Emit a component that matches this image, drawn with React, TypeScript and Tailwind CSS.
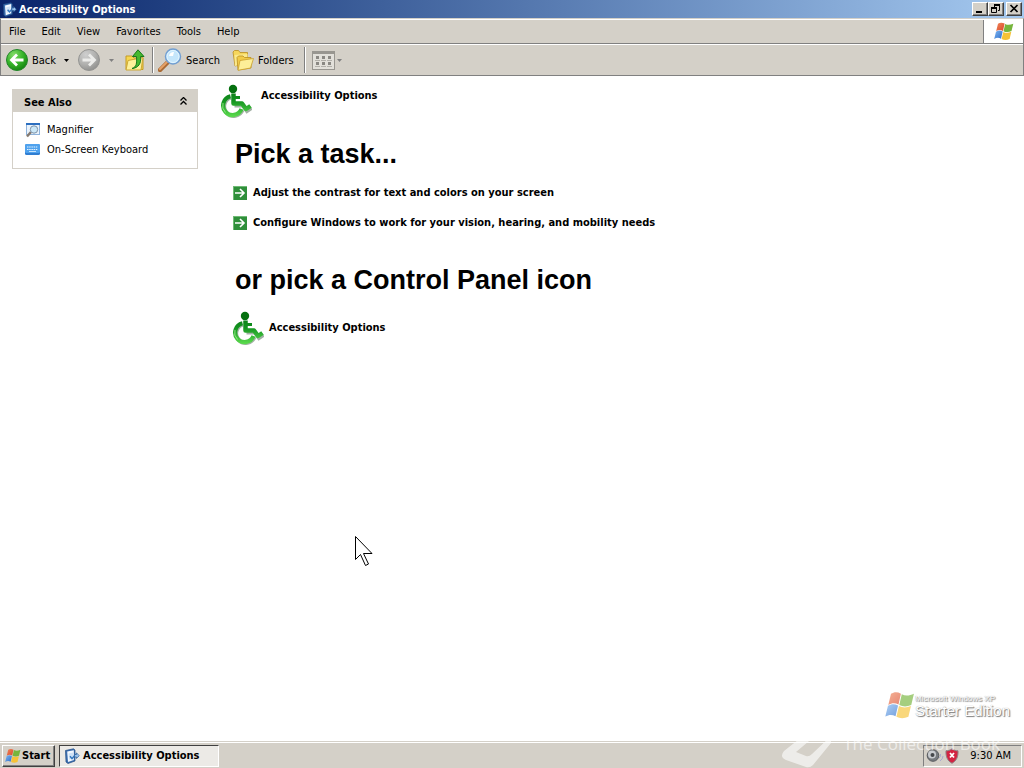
import type { ReactNode } from 'react'

const raised =
  'border border-t-white border-l-white border-r-[#404040] border-b-[#404040] bg-[#d4d0c8] shadow-[inset_-1px_-1px_0_#808080]'

function WindowsFlag({ className }: { className?: string }) {
  return (
    <svg viewBox="0 0 20 19" className={className} aria-hidden="true">
      <defs>
        <linearGradient id="flagRed" x1="0" y1="0" x2="1" y2="1">
          <stop offset="0" stopColor="#f0865a" />
          <stop offset="1" stopColor="#d9482a" />
        </linearGradient>
        <linearGradient id="flagBlue" x1="0" y1="0" x2="1" y2="1">
          <stop offset="0" stopColor="#7db4f0" />
          <stop offset="1" stopColor="#2f6fcb" />
        </linearGradient>
      </defs>
      <path d="M4 1.700C6 .3 8.400 .3 10.600 1.600L9 8.900C6.900 7.700 4.600 7.700 2.200 9.100Z" fill="url(#flagRed)" />
      <path d="M11.200 2C13.500 3.300 16.200 3.100 19.300 1.700L17.500 9.100C14.800 10.400 12 10.400 9.500 9.200Z" fill="#76b53c" />
      <path d="M2 9.700C4.200 8.300 6.500 8.300 8.700 9.500L7 16.700C4.900 15.400 2.600 15.500 .2 16.900Z" fill="url(#flagBlue)" />
      <path d="M9.300 9.900C11.700 11.100 14.500 11.100 17.300 9.800L15.600 17C12.800 18.300 10 18.300 7.600 17Z" fill="#f6c236" />
    </svg>
  )
}

function OptionsIcon({ className }: { className?: string }) {
  return (
    <svg viewBox="0 0 16 16" className={className} aria-hidden="true">
      <path d="M1.500 2.500 9.500 .8 11 2v11L4 15.500 2 14Z" fill="#3d6fb0" stroke="#1f4a82" strokeWidth=".7" />
      <path d="M3.200 3.600 9.800 2.200v9.800L4 14Z" fill="#f4f9ff" />
      <path d="M4.500 5.500 9 4.500v5.500L5 11.700Z" fill="#cfe2f6" />
      <path d="m6 8.300 2 2.400L12 6" fill="none" stroke="#3377bd" strokeWidth="1.500" />
      <path d="M10.500 6.500h2V4.800l2.700 2.900-2.700 2.800V9h-2Z" fill="#9dc4ed" stroke="#285b96" strokeWidth=".7" />
    </svg>
  )
}

function WheelchairIcon() {
  return (
    <svg viewBox="0 0 32 34" className="h-[34px] w-8 shrink-0" aria-hidden="true">
      <defs>
        <linearGradient id="wheel" gradientUnits="userSpaceOnUse" x1="0" y1="1" x2="0" y2="33">
          <stop offset="0" stopColor="#05700f" />
          <stop offset=".5" stopColor="#149420" />
          <stop offset="1" stopColor="#5cdc4e" />
        </linearGradient>
      </defs>
      <g fill="none" stroke="#56705a" strokeOpacity=".55">
        <path d="M10.500 13.500A9.500 9.500 0 1 0 22.500 26" strokeWidth="4" />
        <path d="M14.500 21.500H23l4 5.500 4.500-3" strokeWidth="4" />
      </g>
      <g fill="none" stroke="url(#wheel)" strokeLinejoin="round">
        <path d="M10.500 12.300A9.500 9.500 0 1 0 21.500 25" strokeWidth="4.200" />
        <path d="M13.500 9.500V19.500h8.500l4 5.500 4.500-3" strokeWidth="4.500" />
        <path d="M13 13.500h7" strokeWidth="3" />
      </g>
      <circle cx="13" cy="5" r="4.200" fill="#05700f" />
      <path d="M3 19a9.500 9.500 0 0 0 2.500 9.500" fill="none" stroke="#a6f295" strokeWidth=".8" />
    </svg>
  )
}

function RoundArrow({ back }: { back?: boolean }) {
  return (
    <svg viewBox="0 0 24 24" className="size-6 shrink-0" aria-hidden="true">
      <defs>
        <radialGradient id={back ? 'backFill' : 'forwardFill'} cx=".35" cy=".25" r=".8">
          <stop offset="0" stopColor={back ? '#83db69' : '#cfcfcf'} />
          <stop offset=".55" stopColor={back ? '#35b329' : '#b2b2b0'} />
          <stop offset="1" stopColor={back ? '#14820f' : '#8f8f8d'} />
        </radialGradient>
      </defs>
      <circle
        cx="12"
        cy="12"
        r="10.500"
        fill={back ? 'url(#backFill)' : 'url(#forwardFill)'}
        stroke={back ? '#23862a' : '#949492'}
      />
      <path
        d={back ? 'M18.500 12H7M12 6.500 6.500 12l5.500 5.500' : 'M5.500 12H17M12 6.500l5.500 5.500-5.500 5.500'}
        fill="none"
        stroke={back ? '#fff' : '#ececea'}
        strokeWidth="2.800"
      />
    </svg>
  )
}

function Caret({ className }: { className?: string }) {
  return (
    <svg viewBox="0 0 5 3" className={`h-[3px] w-[5px] shrink-0 ${className ?? ''}`} aria-hidden="true">
      <path d="M0 0h5L2.500 3Z" fill="currentColor" />
    </svg>
  )
}

function UpFolderIcon() {
  return (
    <svg viewBox="0 0 22 22" className="size-[22px]" aria-hidden="true">
      <path d="M2 7h6l2 2h9v11.500H2Z" fill="#f6d750" stroke="#c49b24" />
      <path d="m4 11.500 15-3-2 12.500H2Z" fill="#fdf09a" stroke="#cda735" />
      <path d="M8 19.500c4.500-1.500 5-5 4.500-12H8.500L14 .8l6 6.700h-3.400c.8 7-2.200 11.500-8.600 12Z" fill="#45b82f" stroke="#18791b" />
    </svg>
  )
}

function SearchIcon() {
  return (
    <svg viewBox="0 0 24 24" className="size-6" aria-hidden="true">
      <path d="m10 14-8 8" stroke="#a96a35" strokeWidth="4.500" strokeLinecap="round" />
      <path d="m10 13-8 8" stroke="#e5a066" strokeWidth="2.200" strokeLinecap="round" />
      <circle cx="15" cy="8.500" r="7.500" fill="#c5e6fb" stroke="#739fd1" strokeWidth="1.500" />
      <circle cx="15" cy="8.500" r="6" fill="none" stroke="#e4f6ff" />
      <path d="M11 8a4.500 4.500 0 0 1 5-4l-1 4Z" fill="#fff" />
    </svg>
  )
}

function FoldersIcon() {
  return (
    <svg viewBox="0 0 22 22" className="size-[22px]" aria-hidden="true">
      <path d="M1 3 2.500 1.500h4L8 3.500h7.500V14L3 17Z" fill="#f6d65c" stroke="#b98e21" strokeWidth=".8" />
      <path d="m2.500 6 13-1v9L3 17Z" fill="#fbe98c" />
      <path d="M5 8.500 6.500 7H11l1.500 1.500H19V19L6 21Z" fill="#f2cb48" stroke="#b98e21" strokeWidth=".8" />
      <path d="m8 11.500 13.500-2-3 9.500L6 21.300Z" fill="#fdef98" stroke="#caa02c" strokeWidth=".8" />
    </svg>
  )
}

function ViewsIcon() {
  return (
    <svg viewBox="0 0 23 19" className="h-[19px] w-[23px]" aria-hidden="true">
      <rect x=".5" y=".5" width="22" height="18" fill="#e2e0da" stroke="#989690" />
      <path d="M1 2h21" stroke="#989690" strokeWidth="2" />
      {[4, 10, 16].map((x) =>
        [5, 11].map((y) => (
          <g key={`${x}-${y}`}>
            <rect x={x} y={y} width="3" height="3" fill="#8a8883" />
            <rect x={x - 1} y={y + 4} width="5" height="1" fill="#b2b0aa" />
          </g>
        )),
      )}
    </svg>
  )
}

function GoIcon() {
  return (
    <svg viewBox="0 0 14 14" className="size-[14px] shrink-0" aria-hidden="true">
      <rect width="14" height="14" fill="#2f8f3a" />
      <path d="M0 0h14v1H1v13H0Z" fill="#6fba74" />
      <path d="M2 7h9M7 3l4 4-4 4" fill="none" stroke="#fff" strokeWidth="1.600" />
    </svg>
  )
}

function MagnifierIcon() {
  return (
    <svg viewBox="0 0 16 16" className="size-4" aria-hidden="true">
      <rect x="1.500" y="1.500" width="13" height="11" fill="#eaf3fc" stroke="#8eb3dc" />
      <path d="M1 2h14" stroke="#2c6fc0" strokeWidth="2" />
      <path d="m6 10-4 4.500" stroke="#857a70" strokeWidth="2.500" />
      <circle cx="9" cy="7.500" r="3.700" fill="#cbe8f8" stroke="#7f93a8" />
    </svg>
  )
}

function KeyboardIcon() {
  return (
    <svg viewBox="0 0 16 16" className="size-4" aria-hidden="true">
      <rect x="0" y="2" width="15" height="11" rx="1.500" fill="#2f7ed2" />
      <rect x="0" y="2" width="15" height="9" rx="1.500" fill="#4fa2ee" />
      <path d="M2 5h11M2 7.500h11" stroke="#e5f4ff" strokeDasharray="1.500 .7" />
      <path d="M4 9.500h7" stroke="#c8e4fb" />
    </svg>
  )
}

function TitleButton({ label, children }: { label: string; children: ReactNode }) {
  return (
    <button type="button" aria-label={label} className={`h-[14px] w-4 ${raised}`}>
      <svg viewBox="0 0 14 12" className="h-3 w-[14px]" fill="none" stroke="#000" aria-hidden="true">
        {children}
      </svg>
    </button>
  )
}

function Separator() {
  return <div className="mx-1 h-[26px] w-0.5 border-l border-r border-l-[#808080] border-r-white" />
}

const menus = ['File', 'Edit', 'View', 'Favorites', 'Tools', 'Help']
const tasks = [
  'Adjust the contrast for text and colors on your screen',
  'Configure Windows to work for your vision, hearing, and mobility needs',
]

export default function App() {
  return (
    <div className="relative flex min-h-screen flex-col overflow-hidden bg-white font-['DejaVu_Sans_Condensed','DejaVu_Sans',sans-serif] text-[11px] leading-[14px] text-black">
      <header className="flex h-[18px] items-center bg-linear-to-r from-[#0a246a] to-[#a6caf0] pr-0.5 pl-0.5 font-bold text-white">
        <OptionsIcon className="size-[15px]" />
        <h1 className="grow pt-px pl-0.5">Accessibility Options</h1>
        <TitleButton label="Minimize">
          <path d="M3 9h6" strokeWidth="2" />
        </TitleButton>
        <TitleButton label="Restore">
          <path d="M5 2h6M2 5h6" strokeWidth="2" />
          <path d="M5.500 2v2M10.500 2v5.500H9M2.500 5v4.500h5V5" />
        </TitleButton>
        <div className="w-0.5" />
        <TitleButton label="Close">
          <path d="m3.500 2 7 7M10.500 2l-7 7" strokeWidth="1.700" />
        </TitleButton>
      </header>

      <div className="border-x border-t border-[#808080] border-t-[#d4d0c8] bg-[#d4d0c8]">
        <nav className="flex h-[25px] border-t border-b border-t-white border-b-[#808080]">
          <div className="flex grow items-center gap-4 pt-px pl-2">
            {menus.map((menu) => (
              <button key={menu} type="button">
                {menu}
              </button>
            ))}
          </div>
          <div className="flex w-10 items-center justify-center border-l border-[#808080] bg-white">
            <WindowsFlag className="h-[19px] w-5" />
          </div>
        </nav>

        <div className="flex h-8 items-center border-t border-b border-t-white border-b-[#808080] pl-1">
          <button type="button" className="flex items-center gap-[3px]">
            <RoundArrow back />
            <span className="pt-px">Back</span>
          </button>
          <button type="button" aria-label="Back history" className="px-2">
            <Caret />
          </button>
          <button type="button" aria-label="Forward">
            <RoundArrow />
          </button>
          <button type="button" aria-label="Forward history" className="px-2 text-[#808080]">
            <Caret />
          </button>
          <button type="button" aria-label="Up" className="px-0.5">
            <UpFolderIcon />
          </button>
          <Separator />
          <button type="button" className="flex items-center gap-1">
            <SearchIcon />
            <span className="pt-px">Search</span>
          </button>
          <button type="button" className="ml-3 flex items-center gap-1">
            <FoldersIcon />
            <span className="pt-px">Folders</span>
          </button>
          <div className="w-1.5" />
          <Separator />
          <button type="button" aria-label="Views" className="flex items-center gap-0.5 pl-0.5 text-[#808080]">
            <ViewsIcon />
            <Caret />
          </button>
        </div>
      </div>

      <div className="flex grow items-start pl-3">
        <aside className="mt-[13px] w-[186px] shrink-0 border border-[#d4d0c8]">
          <div className="flex h-[22px] items-center justify-between bg-[#d4d0c8] pr-2.5 pl-[11px]">
            <h2 className="pt-1 font-bold">See Also</h2>
            <button type="button" aria-label="Collapse See Also">
              <svg viewBox="0 0 7 8" className="h-2 w-[7px]" fill="none" stroke="#000" aria-hidden="true">
                <path d="m.5 3.500 3-3 3 3M.5 7.500l3-3 3 3" strokeWidth="1.300" />
              </svg>
            </button>
          </div>
          <ul className="space-y-1 pt-2.5 pb-2.5 pl-3">
            <li>
              <a href="#magnifier" className="flex items-center gap-1.5">
                <MagnifierIcon />
                Magnifier
              </a>
            </li>
            <li>
              <a href="#keyboard" className="flex items-center gap-1.5">
                <KeyboardIcon />
                On-Screen Keyboard
              </a>
            </li>
          </ul>
        </aside>

        <main className="min-w-0 grow pt-2 pl-[22px] font-bold">
          <div className="flex gap-[9px]">
            <WheelchairIcon />
            <p className="pt-[5px]">Accessibility Options</p>
          </div>
          <div className="pl-3">
            <h2 className="mt-5 pl-[3px] font-['Liberation_Sans',Arial,sans-serif] text-[27px] leading-8">
              Pick a task...
            </h2>
            <ul className="mt-4 space-y-4 pl-px">
              {tasks.map((task) => (
                <li key={task}>
                  <a href="#task" className="flex items-center gap-1.5">
                    <GoIcon />
                    {task}
                  </a>
                </li>
              ))}
            </ul>
            <h2 className="mt-[34px] pl-[3px] font-['Liberation_Sans',Arial,sans-serif] text-[27px] leading-8">
              or pick a Control Panel icon
            </h2>
            <a href="#accessibility" className="mt-[15px] flex w-fit items-center gap-[5px]">
              <WheelchairIcon />
              Accessibility Options
            </a>
          </div>
        </main>
      </div>

      {/* desktop edition mark */}
      <div className="absolute right-3.5 bottom-12 flex items-center font-['Liberation_Sans',Arial,sans-serif] text-white">
        <WindowsFlag className="h-[29px] w-[30px] opacity-65" />
        <div className="[text-shadow:1px_1px_1px_#777,0_0_1px_#999]">
          <p className="text-[8px] leading-[10px]">Microsoft Windows XP</p>
          <p className="text-[15px] leading-[14px]">Starter Edition</p>
        </div>
      </div>

      <svg viewBox="0 0 19 31" className="absolute top-[536px] left-[355px] h-[31px] w-[19px]" aria-hidden="true">
        <path d="M.5 .5v23l5-5 5 11 3-1.500-5-10.500h8.500Z" fill="#fff" stroke="#000" />
      </svg>

      <footer className="relative flex h-[27px] items-center border-t border-[#d4d0c8] bg-[#d4d0c8] px-0.5 pt-px shadow-[inset_0_1px_0_#fff]">
        <button type="button" className={`mr-1 flex h-[22px] w-[53px] items-center gap-px pl-0.5 font-bold ${raised}`}>
          <WindowsFlag className="size-4" />
          Start
        </button>
        <button
          type="button"
          className="flex h-[22px] w-40 items-center gap-[3px] border border-t-[#404040] border-r-white border-b-white border-l-[#404040] bg-[#eceae6] pl-1 font-bold"
        >
          <OptionsIcon className="size-4" />
          Accessibility Options
        </button>
        <div className="ml-auto flex h-[22px] items-center border border-t-[#808080] border-r-white border-b-white border-l-[#808080] pr-2.5 pl-0.5">
          <svg viewBox="0 0 18 16" className="h-4 w-[18px]" aria-hidden="true">
            <circle cx="7" cy="7.500" r="5.800" fill="#777b80" stroke="#55585c" />
            <circle cx="6" cy="6.500" r="4" fill="#c9ccd0" />
            <circle cx="6.500" cy="7" r="2" fill="#44474b" />
            <path d="M13 10q2-1 1.500-4M14 13q3-2 3-5" fill="none" stroke="#a9a9cf" />
          </svg>
          <svg viewBox="0 0 16 16" className="size-4" aria-hidden="true">
            <path d="M8 .8c2 1.500 4 2 6 2 .3 6-1.500 10-6 12.500C3.500 12.800 1.700 8.800 2 2.800c2 0 4-.5 6-2Z" fill="#d32342" stroke="#8f8084" />
            <path d="m6 5 4 4.500M10 5 6 9.500" stroke="#fff" strokeWidth="1.800" />
          </svg>
          <time className="pl-2.5">9:30 AM</time>
        </div>
        {/* watermark */}
        <div className="pointer-events-none absolute right-6 bottom-0 flex h-8 items-start gap-3 text-white opacity-60">
          <svg viewBox="0 0 50 32" className="h-8 w-[50px]" aria-hidden="true">
            <path
              d="M22 0 3 15q-5 6 2 9l20 7q4 1 7-2L50 7V0L31 18q-3 3-6 2l-10-4L34 0Z"
              fill="currentColor"
            />
          </svg>
          <span className="font-['Open_Sans',sans-serif] text-[17px] leading-4">The Collection Book</span>
        </div>
      </footer>
    </div>
  )
}
